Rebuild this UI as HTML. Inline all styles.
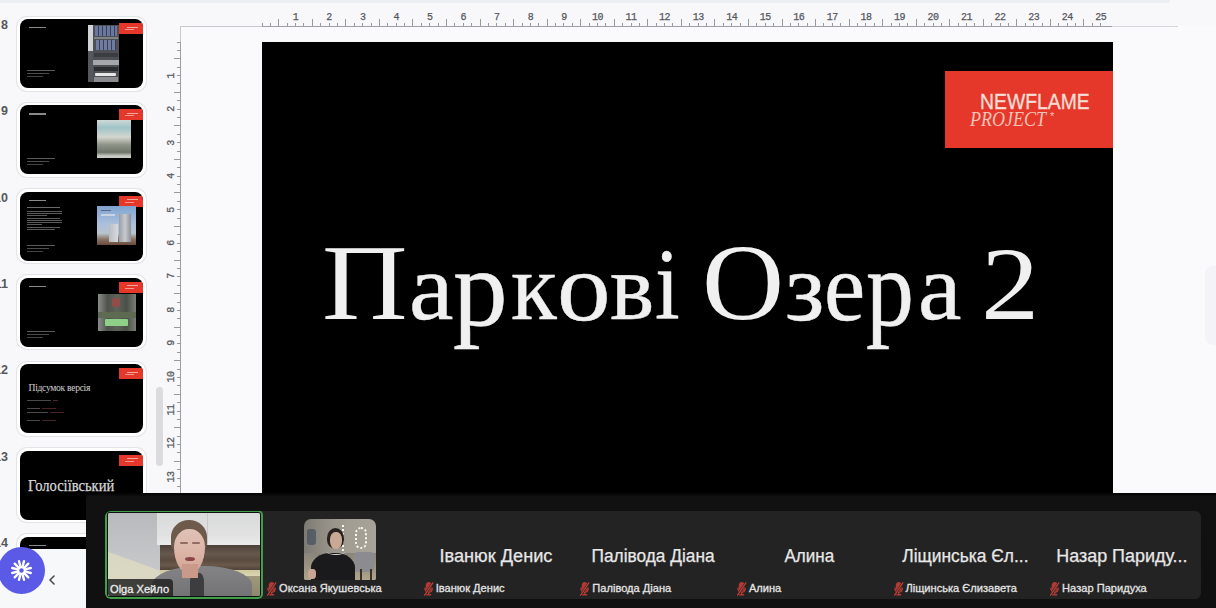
<!DOCTYPE html><html><head><meta charset="utf-8"><style>
*{box-sizing:border-box;margin:0;padding:0}
html,body{width:1216px;height:608px;overflow:hidden;background:#f8f8fb;font-family:"Liberation Sans",sans-serif;position:relative}
.abs{position:absolute}
#topband{left:0;top:0;width:1170px;height:2.5px;background:#eceef1;border-radius:0 0 6px 0}
#canvas{left:180px;top:26px;width:1036px;height:582px;background:#fafafd}
#hline{left:180px;top:25.5px;width:998px;height:1.2px;background:linear-gradient(90deg,#c8c9cc 0,#c8c9cc 82px,#9fa0a3 82px,#9fa0a3 932px,#d6d7da 932px)}
#vline{left:180px;top:26px;width:1.2px;height:470px;background:linear-gradient(180deg,#c8c9cc 0,#c8c9cc 16px,#9fa0a3 16px)}
.tk{position:absolute;background:#98999d}
.rn{position:absolute;width:20px;text-align:center;font-size:10px;color:#55575b;-webkit-text-stroke:0.25px #55575b;line-height:10px;font-family:"Liberation Mono",monospace;letter-spacing:-0.5px}
.rv{transform:rotate(-90deg)}
#slide{left:262px;top:42px;width:851px;height:460px;background:#000}
#logo{left:945px;top:71px;width:168px;height:77px;background:#e6382a}
#nf{left:980.4px;top:89px;font-size:22px;color:#f7ddd5;white-space:nowrap;line-height:26px;transform:scale(0.88,0.987);transform-origin:0 0;-webkit-text-stroke:0.35px #f7ddd5}
#pj{left:969.6px;top:106.4px;font-family:"Liberation Serif",serif;font-style:italic;font-size:22px;color:#f3c4b8;white-space:nowrap;line-height:26px;transform:scale(0.819,1);transform-origin:0 0}
#ast{left:1050px;top:110px;font-family:"Liberation Sans",sans-serif;font-size:11px;line-height:12px;color:#f3c4b8}
.tg{position:absolute;font-family:"Liberation Serif",serif;font-size:106px;color:#f0f0f0;white-space:nowrap;line-height:117px;transform-origin:0 0;-webkit-text-stroke:0.5px #f0f0f0}
.num{left:-29px;width:37px;text-align:right;font-size:12.5px;color:#55575b;line-height:14px;font-weight:bold}
.th{left:17px;width:129px;height:74px;background:#fff;border-radius:10px;box-shadow:0 0 0 1px #e3e4e8}
.th .in{position:absolute;left:3px;top:2.5px;width:123px;height:69px;background:#000;border-radius:8px;overflow:hidden}
.rd{position:absolute;right:0;top:4px;width:24px;height:11px;background:#e5382a}
.rd:before{content:'';position:absolute;left:8px;top:3.5px;width:11px;height:1px;background:#f2a89c}
.rd:after{content:'';position:absolute;left:6px;top:6px;width:9px;height:1px;background:#ee9a8e}
.tl{position:absolute;height:1px;background:#8a8a8a}
#scroll{left:156px;top:387px;width:7px;height:79px;border-radius:4px;background:#dadbdd}
#lpanel{left:0;top:549px;width:86px;height:59px;background:#f7f8fa}
#bar{left:86px;top:493px;width:1130px;height:115px;background:linear-gradient(180deg,#050505 0,#080808 2px,#111 3px,#101010);border-radius:6px 0 0 0}
#panel{left:104.5px;top:511px;width:1096px;height:87.5px;background:#232323;border-radius:6px;overflow:hidden}
.tile{position:absolute;top:0;height:87px;width:156.6px}
.big{position:absolute;top:34.5px;left:0;width:100%;text-align:center;font-size:18px;color:#e8e8e8;white-space:nowrap;line-height:20px;-webkit-text-stroke:0.25px #e8e8e8}
.sm{position:absolute;top:71px;left:18px;font-size:11.1px;color:#e4e4e4;white-space:nowrap;line-height:12px;-webkit-text-stroke:0.3px #e4e4e4}
.mic{position:absolute;top:70.5px;left:5px}
#purple{left:-2px;top:546.5px;width:47px;height:47px;border-radius:50%;background:#5b5ae6}
</style></head><body>
<div class="abs" id="topband"></div>
<div class="abs" id="canvas"></div>
<div class="abs" id="hline"></div><div class="abs" id="vline"></div>
<div class="tk" style="left:261.50px;top:22.5px;width:1px;height:3.5px"></div>
<div class="tk" style="left:269.89px;top:22.5px;width:1px;height:3.5px"></div>
<div class="tk" style="left:278.27px;top:19.0px;width:1px;height:7px"></div>
<div class="tk" style="left:286.66px;top:22.5px;width:1px;height:3.5px"></div>
<div class="tk" style="left:295.05px;top:22.5px;width:1px;height:3.5px"></div>
<div class="tk" style="left:303.44px;top:22.5px;width:1px;height:3.5px"></div>
<div class="tk" style="left:311.82px;top:19.0px;width:1px;height:7px"></div>
<div class="tk" style="left:320.21px;top:22.5px;width:1px;height:3.5px"></div>
<div class="tk" style="left:328.60px;top:22.5px;width:1px;height:3.5px"></div>
<div class="tk" style="left:336.99px;top:22.5px;width:1px;height:3.5px"></div>
<div class="tk" style="left:345.38px;top:19.0px;width:1px;height:7px"></div>
<div class="tk" style="left:353.76px;top:22.5px;width:1px;height:3.5px"></div>
<div class="tk" style="left:362.15px;top:22.5px;width:1px;height:3.5px"></div>
<div class="tk" style="left:370.54px;top:22.5px;width:1px;height:3.5px"></div>
<div class="tk" style="left:378.92px;top:19.0px;width:1px;height:7px"></div>
<div class="tk" style="left:387.31px;top:22.5px;width:1px;height:3.5px"></div>
<div class="tk" style="left:395.70px;top:22.5px;width:1px;height:3.5px"></div>
<div class="tk" style="left:404.09px;top:22.5px;width:1px;height:3.5px"></div>
<div class="tk" style="left:412.48px;top:19.0px;width:1px;height:7px"></div>
<div class="tk" style="left:420.86px;top:22.5px;width:1px;height:3.5px"></div>
<div class="tk" style="left:429.25px;top:22.5px;width:1px;height:3.5px"></div>
<div class="tk" style="left:437.64px;top:22.5px;width:1px;height:3.5px"></div>
<div class="tk" style="left:446.02px;top:19.0px;width:1px;height:7px"></div>
<div class="tk" style="left:454.41px;top:22.5px;width:1px;height:3.5px"></div>
<div class="tk" style="left:462.80px;top:22.5px;width:1px;height:3.5px"></div>
<div class="tk" style="left:471.19px;top:22.5px;width:1px;height:3.5px"></div>
<div class="tk" style="left:479.57px;top:19.0px;width:1px;height:7px"></div>
<div class="tk" style="left:487.96px;top:22.5px;width:1px;height:3.5px"></div>
<div class="tk" style="left:496.35px;top:22.5px;width:1px;height:3.5px"></div>
<div class="tk" style="left:504.74px;top:22.5px;width:1px;height:3.5px"></div>
<div class="tk" style="left:513.12px;top:19.0px;width:1px;height:7px"></div>
<div class="tk" style="left:521.51px;top:22.5px;width:1px;height:3.5px"></div>
<div class="tk" style="left:529.90px;top:22.5px;width:1px;height:3.5px"></div>
<div class="tk" style="left:538.29px;top:22.5px;width:1px;height:3.5px"></div>
<div class="tk" style="left:546.67px;top:19.0px;width:1px;height:7px"></div>
<div class="tk" style="left:555.06px;top:22.5px;width:1px;height:3.5px"></div>
<div class="tk" style="left:563.45px;top:22.5px;width:1px;height:3.5px"></div>
<div class="tk" style="left:571.84px;top:22.5px;width:1px;height:3.5px"></div>
<div class="tk" style="left:580.22px;top:19.0px;width:1px;height:7px"></div>
<div class="tk" style="left:588.61px;top:22.5px;width:1px;height:3.5px"></div>
<div class="tk" style="left:597.00px;top:22.5px;width:1px;height:3.5px"></div>
<div class="tk" style="left:605.39px;top:22.5px;width:1px;height:3.5px"></div>
<div class="tk" style="left:613.77px;top:19.0px;width:1px;height:7px"></div>
<div class="tk" style="left:622.16px;top:22.5px;width:1px;height:3.5px"></div>
<div class="tk" style="left:630.55px;top:22.5px;width:1px;height:3.5px"></div>
<div class="tk" style="left:638.94px;top:22.5px;width:1px;height:3.5px"></div>
<div class="tk" style="left:647.33px;top:19.0px;width:1px;height:7px"></div>
<div class="tk" style="left:655.71px;top:22.5px;width:1px;height:3.5px"></div>
<div class="tk" style="left:664.10px;top:22.5px;width:1px;height:3.5px"></div>
<div class="tk" style="left:672.49px;top:22.5px;width:1px;height:3.5px"></div>
<div class="tk" style="left:680.88px;top:19.0px;width:1px;height:7px"></div>
<div class="tk" style="left:689.26px;top:22.5px;width:1px;height:3.5px"></div>
<div class="tk" style="left:697.65px;top:22.5px;width:1px;height:3.5px"></div>
<div class="tk" style="left:706.04px;top:22.5px;width:1px;height:3.5px"></div>
<div class="tk" style="left:714.42px;top:19.0px;width:1px;height:7px"></div>
<div class="tk" style="left:722.81px;top:22.5px;width:1px;height:3.5px"></div>
<div class="tk" style="left:731.20px;top:22.5px;width:1px;height:3.5px"></div>
<div class="tk" style="left:739.59px;top:22.5px;width:1px;height:3.5px"></div>
<div class="tk" style="left:747.97px;top:19.0px;width:1px;height:7px"></div>
<div class="tk" style="left:756.36px;top:22.5px;width:1px;height:3.5px"></div>
<div class="tk" style="left:764.75px;top:22.5px;width:1px;height:3.5px"></div>
<div class="tk" style="left:773.14px;top:22.5px;width:1px;height:3.5px"></div>
<div class="tk" style="left:781.52px;top:19.0px;width:1px;height:7px"></div>
<div class="tk" style="left:789.91px;top:22.5px;width:1px;height:3.5px"></div>
<div class="tk" style="left:798.30px;top:22.5px;width:1px;height:3.5px"></div>
<div class="tk" style="left:806.69px;top:22.5px;width:1px;height:3.5px"></div>
<div class="tk" style="left:815.07px;top:19.0px;width:1px;height:7px"></div>
<div class="tk" style="left:823.46px;top:22.5px;width:1px;height:3.5px"></div>
<div class="tk" style="left:831.85px;top:22.5px;width:1px;height:3.5px"></div>
<div class="tk" style="left:840.24px;top:22.5px;width:1px;height:3.5px"></div>
<div class="tk" style="left:848.62px;top:19.0px;width:1px;height:7px"></div>
<div class="tk" style="left:857.01px;top:22.5px;width:1px;height:3.5px"></div>
<div class="tk" style="left:865.40px;top:22.5px;width:1px;height:3.5px"></div>
<div class="tk" style="left:873.79px;top:22.5px;width:1px;height:3.5px"></div>
<div class="tk" style="left:882.17px;top:19.0px;width:1px;height:7px"></div>
<div class="tk" style="left:890.56px;top:22.5px;width:1px;height:3.5px"></div>
<div class="tk" style="left:898.95px;top:22.5px;width:1px;height:3.5px"></div>
<div class="tk" style="left:907.34px;top:22.5px;width:1px;height:3.5px"></div>
<div class="tk" style="left:915.72px;top:19.0px;width:1px;height:7px"></div>
<div class="tk" style="left:924.11px;top:22.5px;width:1px;height:3.5px"></div>
<div class="tk" style="left:932.50px;top:22.5px;width:1px;height:3.5px"></div>
<div class="tk" style="left:940.89px;top:22.5px;width:1px;height:3.5px"></div>
<div class="tk" style="left:949.27px;top:19.0px;width:1px;height:7px"></div>
<div class="tk" style="left:957.66px;top:22.5px;width:1px;height:3.5px"></div>
<div class="tk" style="left:966.05px;top:22.5px;width:1px;height:3.5px"></div>
<div class="tk" style="left:974.44px;top:22.5px;width:1px;height:3.5px"></div>
<div class="tk" style="left:982.82px;top:19.0px;width:1px;height:7px"></div>
<div class="tk" style="left:991.21px;top:22.5px;width:1px;height:3.5px"></div>
<div class="tk" style="left:999.60px;top:22.5px;width:1px;height:3.5px"></div>
<div class="tk" style="left:1007.99px;top:22.5px;width:1px;height:3.5px"></div>
<div class="tk" style="left:1016.37px;top:19.0px;width:1px;height:7px"></div>
<div class="tk" style="left:1024.76px;top:22.5px;width:1px;height:3.5px"></div>
<div class="tk" style="left:1033.15px;top:22.5px;width:1px;height:3.5px"></div>
<div class="tk" style="left:1041.54px;top:22.5px;width:1px;height:3.5px"></div>
<div class="tk" style="left:1049.92px;top:19.0px;width:1px;height:7px"></div>
<div class="tk" style="left:1058.31px;top:22.5px;width:1px;height:3.5px"></div>
<div class="tk" style="left:1066.70px;top:22.5px;width:1px;height:3.5px"></div>
<div class="tk" style="left:1075.09px;top:22.5px;width:1px;height:3.5px"></div>
<div class="tk" style="left:1083.47px;top:19.0px;width:1px;height:7px"></div>
<div class="tk" style="left:1091.86px;top:22.5px;width:1px;height:3.5px"></div>
<div class="tk" style="left:1100.25px;top:22.5px;width:1px;height:3.5px"></div>
<div class="rn" style="left:285.55px;top:12.5px">1</div>
<div class="rn" style="left:319.10px;top:12.5px">2</div>
<div class="rn" style="left:352.65px;top:12.5px">3</div>
<div class="rn" style="left:386.20px;top:12.5px">4</div>
<div class="rn" style="left:419.75px;top:12.5px">5</div>
<div class="rn" style="left:453.30px;top:12.5px">6</div>
<div class="rn" style="left:486.85px;top:12.5px">7</div>
<div class="rn" style="left:520.40px;top:12.5px">8</div>
<div class="rn" style="left:553.95px;top:12.5px">9</div>
<div class="rn" style="left:587.50px;top:12.5px">10</div>
<div class="rn" style="left:621.05px;top:12.5px">11</div>
<div class="rn" style="left:654.60px;top:12.5px">12</div>
<div class="rn" style="left:688.15px;top:12.5px">13</div>
<div class="rn" style="left:721.70px;top:12.5px">14</div>
<div class="rn" style="left:755.25px;top:12.5px">15</div>
<div class="rn" style="left:788.80px;top:12.5px">16</div>
<div class="rn" style="left:822.35px;top:12.5px">17</div>
<div class="rn" style="left:855.90px;top:12.5px">18</div>
<div class="rn" style="left:889.45px;top:12.5px">19</div>
<div class="rn" style="left:923.00px;top:12.5px">20</div>
<div class="rn" style="left:956.55px;top:12.5px">21</div>
<div class="rn" style="left:990.10px;top:12.5px">22</div>
<div class="rn" style="left:1023.65px;top:12.5px">23</div>
<div class="rn" style="left:1057.20px;top:12.5px">24</div>
<div class="rn" style="left:1090.75px;top:12.5px">25</div>
<div class="tk" style="left:177.0px;top:41.50px;width:3.5px;height:1px"></div>
<div class="tk" style="left:177.0px;top:49.89px;width:3.5px;height:1px"></div>
<div class="tk" style="left:173.5px;top:58.27px;width:7px;height:1px"></div>
<div class="tk" style="left:177.0px;top:66.66px;width:3.5px;height:1px"></div>
<div class="tk" style="left:177.0px;top:75.05px;width:3.5px;height:1px"></div>
<div class="tk" style="left:177.0px;top:83.44px;width:3.5px;height:1px"></div>
<div class="tk" style="left:173.5px;top:91.82px;width:7px;height:1px"></div>
<div class="tk" style="left:177.0px;top:100.21px;width:3.5px;height:1px"></div>
<div class="tk" style="left:177.0px;top:108.60px;width:3.5px;height:1px"></div>
<div class="tk" style="left:177.0px;top:116.99px;width:3.5px;height:1px"></div>
<div class="tk" style="left:173.5px;top:125.38px;width:7px;height:1px"></div>
<div class="tk" style="left:177.0px;top:133.76px;width:3.5px;height:1px"></div>
<div class="tk" style="left:177.0px;top:142.15px;width:3.5px;height:1px"></div>
<div class="tk" style="left:177.0px;top:150.54px;width:3.5px;height:1px"></div>
<div class="tk" style="left:173.5px;top:158.92px;width:7px;height:1px"></div>
<div class="tk" style="left:177.0px;top:167.31px;width:3.5px;height:1px"></div>
<div class="tk" style="left:177.0px;top:175.70px;width:3.5px;height:1px"></div>
<div class="tk" style="left:177.0px;top:184.09px;width:3.5px;height:1px"></div>
<div class="tk" style="left:173.5px;top:192.47px;width:7px;height:1px"></div>
<div class="tk" style="left:177.0px;top:200.86px;width:3.5px;height:1px"></div>
<div class="tk" style="left:177.0px;top:209.25px;width:3.5px;height:1px"></div>
<div class="tk" style="left:177.0px;top:217.64px;width:3.5px;height:1px"></div>
<div class="tk" style="left:173.5px;top:226.02px;width:7px;height:1px"></div>
<div class="tk" style="left:177.0px;top:234.41px;width:3.5px;height:1px"></div>
<div class="tk" style="left:177.0px;top:242.80px;width:3.5px;height:1px"></div>
<div class="tk" style="left:177.0px;top:251.19px;width:3.5px;height:1px"></div>
<div class="tk" style="left:173.5px;top:259.57px;width:7px;height:1px"></div>
<div class="tk" style="left:177.0px;top:267.96px;width:3.5px;height:1px"></div>
<div class="tk" style="left:177.0px;top:276.35px;width:3.5px;height:1px"></div>
<div class="tk" style="left:177.0px;top:284.74px;width:3.5px;height:1px"></div>
<div class="tk" style="left:173.5px;top:293.12px;width:7px;height:1px"></div>
<div class="tk" style="left:177.0px;top:301.51px;width:3.5px;height:1px"></div>
<div class="tk" style="left:177.0px;top:309.90px;width:3.5px;height:1px"></div>
<div class="tk" style="left:177.0px;top:318.29px;width:3.5px;height:1px"></div>
<div class="tk" style="left:173.5px;top:326.67px;width:7px;height:1px"></div>
<div class="tk" style="left:177.0px;top:335.06px;width:3.5px;height:1px"></div>
<div class="tk" style="left:177.0px;top:343.45px;width:3.5px;height:1px"></div>
<div class="tk" style="left:177.0px;top:351.84px;width:3.5px;height:1px"></div>
<div class="tk" style="left:173.5px;top:360.22px;width:7px;height:1px"></div>
<div class="tk" style="left:177.0px;top:368.61px;width:3.5px;height:1px"></div>
<div class="tk" style="left:177.0px;top:377.00px;width:3.5px;height:1px"></div>
<div class="tk" style="left:177.0px;top:385.39px;width:3.5px;height:1px"></div>
<div class="tk" style="left:173.5px;top:393.77px;width:7px;height:1px"></div>
<div class="tk" style="left:177.0px;top:402.16px;width:3.5px;height:1px"></div>
<div class="tk" style="left:177.0px;top:410.55px;width:3.5px;height:1px"></div>
<div class="tk" style="left:177.0px;top:418.94px;width:3.5px;height:1px"></div>
<div class="tk" style="left:173.5px;top:427.32px;width:7px;height:1px"></div>
<div class="tk" style="left:177.0px;top:435.71px;width:3.5px;height:1px"></div>
<div class="tk" style="left:177.0px;top:444.10px;width:3.5px;height:1px"></div>
<div class="tk" style="left:177.0px;top:452.49px;width:3.5px;height:1px"></div>
<div class="tk" style="left:173.5px;top:460.87px;width:7px;height:1px"></div>
<div class="tk" style="left:177.0px;top:469.26px;width:3.5px;height:1px"></div>
<div class="tk" style="left:177.0px;top:477.65px;width:3.5px;height:1px"></div>
<div class="tk" style="left:177.0px;top:486.04px;width:3.5px;height:1px"></div>
<div class="rn rv" style="left:162.30px;top:70.90px">1</div>
<div class="rn rv" style="left:162.30px;top:104.30px">2</div>
<div class="rn rv" style="left:162.30px;top:137.70px">3</div>
<div class="rn rv" style="left:162.30px;top:171.10px">4</div>
<div class="rn rv" style="left:162.30px;top:204.50px">5</div>
<div class="rn rv" style="left:162.30px;top:237.90px">6</div>
<div class="rn rv" style="left:162.30px;top:271.30px">7</div>
<div class="rn rv" style="left:162.30px;top:304.70px">8</div>
<div class="rn rv" style="left:162.30px;top:338.10px">9</div>
<div class="rn rv" style="left:162.30px;top:371.50px">10</div>
<div class="rn rv" style="left:162.30px;top:404.90px">11</div>
<div class="rn rv" style="left:162.30px;top:438.30px">12</div>
<div class="rn rv" style="left:162.30px;top:471.70px">13</div>
<div class="abs" style="left:1205px;top:266px;width:20px;height:79px;border-radius:8px;background:#f4f4f8"></div>
<div class="abs" id="slide"></div>
<div class="abs" id="logo"></div>
<div class="abs" id="nf">NEWFLAME</div>
<div class="abs" id="pj">PROJECT</div><div class="abs" id="ast">*</div>
<div class="tg" style="left:322.3px;top:224.2px;transform:scale(1.118,1.014);-webkit-text-stroke:0">П</div>
<div class="tg" style="left:408.9px;top:234.3px;transform:scale(0.945,0.902)">а</div>
<div class="tg" style="left:452.9px;top:228.6px;transform:scale(1.030,1.033)">р</div>
<div class="tg" style="left:511.0px;top:234.1px;transform:scale(0.890,0.908)">к</div>
<div class="tg" style="left:556.5px;top:233.9px;transform:scale(1.011,0.912)">о</div>
<div class="tg" style="left:609.8px;top:234.1px;transform:scale(0.884,0.908)">в</div>
<div class="tg" style="left:655.3px;top:229.3px;transform:scale(0.838,0.960)">і</div>
<div class="tg" style="left:702.3px;top:223.0px;transform:scale(1.072,1.025);-webkit-text-stroke:0">О</div>
<div class="tg" style="left:785.2px;top:233.9px;transform:scale(0.943,0.912)">з</div>
<div class="tg" style="left:824.2px;top:233.9px;transform:scale(0.875,0.912)">е</div>
<div class="tg" style="left:866.2px;top:228.6px;transform:scale(0.904,1.033)">р</div>
<div class="tg" style="left:918.2px;top:234.3px;transform:scale(0.924,0.902)">а</div>
<div class="tg" style="left:980.9px;top:228.1px;transform:scale(1.100,0.973);-webkit-text-stroke:0">2</div>

<div class="abs num" style="top:18.0px">8</div>
<div class="abs th" style="top:16.5px"><div class="in" id="in8"><div class="rd"></div><div class="tl" style="left:9px;top:8px;width:17px;height:1.2px;background:#8a8a8a"></div><div class="tl" style="left:7px;top:51px;width:28px;height:1px;background:#5a5a5a"></div><div class="tl" style="left:7px;top:54px;width:22px;height:1px;background:#4c4c4c"></div><div class="tl" style="left:7px;top:57px;width:16px;height:1px;background:#444"></div><div style="position:absolute;left:68px;top:6px;width:31px;height:57px;background:#4e5056;overflow:hidden"><div style="position:absolute;left:0;top:0;width:5px;height:26px;background:#d2d3d6"></div><div style="position:absolute;left:0;top:26px;width:5px;height:31px;background:#55575c"></div><div style="position:absolute;left:7px;top:1px;width:22px;height:10px;background:repeating-linear-gradient(90deg,#6a78a0 0 3px,#3a4050 3px 4px)"></div><div style="position:absolute;left:6px;top:12px;width:24px;height:2px;background:#808388"></div><div style="position:absolute;left:8px;top:15px;width:20px;height:10px;background:repeating-linear-gradient(90deg,#6e7ca4 0 3px,#3a4050 3px 4px)"></div><div style="position:absolute;left:6px;top:28px;width:24px;height:4px;background:#3a3c42"></div><div style="position:absolute;left:5px;top:35px;width:26px;height:5px;background:#a5a7ac"></div><div style="position:absolute;left:6px;top:42px;width:24px;height:4px;background:#2a2c30"></div><div style="position:absolute;left:7px;top:48px;width:21px;height:3px;background:#e6e6e6;border-radius:1px"></div><div style="position:absolute;left:6px;top:52px;width:24px;height:5px;background:#8a8c90"></div></div></div></div>
<div class="abs num" style="top:104.33px">9</div>
<div class="abs th" style="top:102.83px"><div class="in" id="in9"><div class="rd"></div><div class="tl" style="left:9px;top:8px;width:17px;height:1.2px;background:#8a8a8a"></div><div class="tl" style="left:7px;top:53px;width:28px;height:1px;background:#5a5a5a"></div><div class="tl" style="left:7px;top:56px;width:22px;height:1px;background:#4c4c4c"></div><div class="tl" style="left:7px;top:59px;width:16px;height:1px;background:#444"></div><div style="position:absolute;left:77px;top:15px;width:34px;height:38px;background:linear-gradient(180deg,#d0d8d6 0,#9fc4c8 20%,#d3d6cf 45%,#8e9488 65%,#6f7468 85%,#c9cbc5 95%)"></div></div></div>
<div class="abs num" style="top:190.66px">10</div>
<div class="abs th" style="top:189.16px"><div class="in" id="in10"><div class="rd"></div><div class="tl" style="left:9px;top:8px;width:17px;height:1.2px;background:#8a8a8a"></div><div class="tl" style="left:7px;top:15px;width:33px;height:1px;background:#6a6a6a"></div><div class="tl" style="left:7px;top:19px;width:35px;height:1px;background:#5a5a5a"></div><div class="tl" style="left:7px;top:21px;width:35px;height:1px;background:#5a5a5a"></div><div class="tl" style="left:7px;top:23px;width:20px;height:1px;background:#5a5a5a"></div><div class="tl" style="left:7px;top:26px;width:33px;height:1px;background:#5a5a5a"></div><div class="tl" style="left:7px;top:28px;width:35px;height:1px;background:#5a5a5a"></div><div class="tl" style="left:7px;top:30px;width:35px;height:1px;background:#5a5a5a"></div><div class="tl" style="left:7px;top:32px;width:15px;height:1px;background:#5a5a5a"></div><div class="tl" style="left:7px;top:35px;width:33px;height:1px;background:#5a5a5a"></div><div class="tl" style="left:7px;top:37px;width:28px;height:1px;background:#5a5a5a"></div><div class="tl" style="left:7px;top:53px;width:28px;height:1px;background:#5a5a5a"></div><div class="tl" style="left:7px;top:56px;width:22px;height:1px;background:#4c4c4c"></div><div class="tl" style="left:7px;top:59px;width:16px;height:1px;background:#444"></div><div style="position:absolute;left:76.5px;top:14px;width:39.5px;height:39.5px;overflow:hidden;background:linear-gradient(180deg,#7fa3d0,#a9c0dc 45%,#b8c4cc 70%,#8a7466 85%,#6a4a3a)"><div style="position:absolute;left:4px;top:4px;width:10px;height:1px;background:#5a6a88"></div><div style="position:absolute;left:4px;top:8px;width:14px;height:2px;background:#c8d4e4"></div><div style="position:absolute;left:22px;top:8px;width:12px;height:28px;background:linear-gradient(90deg,#9a9ea6,#c8cad0 50%,#8c9098)"></div><div style="position:absolute;left:12px;top:18px;width:9px;height:18px;background:linear-gradient(90deg,#b8bcc4,#d8dade)"></div></div></div></div>
<div class="abs num" style="top:276.99px">11</div>
<div class="abs th" style="top:275.49px"><div class="in" id="in11"><div class="rd"></div><div class="tl" style="left:9px;top:8px;width:17px;height:1.2px;background:#8a8a8a"></div><div class="tl" style="left:7px;top:53px;width:28px;height:1px;background:#5a5a5a"></div><div class="tl" style="left:7px;top:56px;width:22px;height:1px;background:#4c4c4c"></div><div class="tl" style="left:7px;top:59px;width:16px;height:1px;background:#444"></div><div style="position:absolute;left:78px;top:16px;width:37.5px;height:37px;overflow:hidden;background:linear-gradient(90deg,#8a8e8a,#4e544c 25%,#5d6358 50%,#4a5048 75%,#7a7e78)"><div style="position:absolute;left:14px;top:4px;width:8px;height:9px;background:#a04848;border-radius:2px;opacity:.8"></div><div style="position:absolute;left:0;top:18px;width:37.5px;height:6px;background:#5f6a52"></div><div style="position:absolute;left:7px;top:25px;width:23px;height:7px;background:#8fd088;border-radius:1px"></div></div></div></div>
<div class="abs num" style="top:363.32px">12</div>
<div class="abs th" style="top:361.82px"><div class="in" id="in12"><div class="rd"></div><div style="position:absolute;left:8.5px;top:18.5px;font-family:'Liberation Serif',serif;font-size:9.6px;line-height:10px;color:#d0d0d0;white-space:nowrap;letter-spacing:-0.3px">Підсумок версiя</div><div class="tl" style="left:7px;top:35.5px;width:24px;height:1px;background:#4a4a4a"></div><div class="tl" style="left:33px;top:35.5px;width:5px;height:1px;background:#4a2a2a"></div><div class="tl" style="left:7px;top:43.5px;width:13px;height:1px;background:#4a4a4a"></div><div class="tl" style="left:22px;top:43.5px;width:14px;height:1px;background:#4a2424"></div><div class="tl" style="left:7px;top:48px;width:21px;height:1px;background:#4a4a4a"></div><div class="tl" style="left:30px;top:48px;width:14px;height:1px;background:#4a2424"></div><div class="tl" style="left:7px;top:56px;width:13px;height:1px;background:#4a4a4a"></div><div class="tl" style="left:22px;top:56px;width:14px;height:1px;background:#4a2424"></div></div></div>
<div class="abs num" style="top:449.65px">13</div>
<div class="abs th" style="top:448.15px"><div class="in" id="in13"><div class="rd"></div><div style="position:absolute;left:8px;top:26.5px;font-family:'Liberation Serif',serif;font-size:16px;line-height:18px;color:#d8d8d8;white-space:nowrap;transform:scaleX(0.91);transform-origin:0 0;-webkit-text-stroke:0.25px #d8d8d8">Голосіївський</div></div></div>
<div class="abs num" style="top:535.98px">14</div>
<div class="abs th" style="top:534.48px"><div class="in" id="in14"><div class="rd"></div><div class="tl" style="left:9px;top:8px;width:17px;height:1.2px;background:#8a8a8a"></div></div></div>
<div class="abs" id="scroll"></div>
<div class="abs" id="lpanel"></div>
<div class="abs" id="purple"><svg width="47" height="47" viewBox="0 0 47 47" style="position:absolute;left:0;top:0"><g stroke="#fff" stroke-width="2.4" stroke-linecap="round"><path d="M27.56 24.59 L32.77 25.98"/><path d="M26.47 26.47 L30.29 30.29"/><path d="M24.59 27.56 L25.98 32.77"/><path d="M22.41 27.56 L21.02 32.77"/><path d="M20.53 26.47 L16.71 30.29"/><path d="M19.44 24.59 L14.23 25.98"/><path d="M19.44 22.41 L14.23 21.02"/><path d="M20.53 20.53 L16.71 16.71"/><path d="M22.41 19.44 L21.02 14.23"/><path d="M24.59 19.44 L25.98 14.23"/><path d="M26.47 20.53 L30.29 16.71"/><path d="M27.56 22.41 L32.77 21.02"/></g><circle cx="23.5" cy="23.5" r="4.4" fill="#fff"/><circle cx="23.5" cy="23.5" r="2.2" fill="#5b5ae6"/></svg></div>
<svg class="abs" style="left:48px;top:575px" width="8" height="10" viewBox="0 0 8 10"><path d="M6 1 L2 5 L6 9" fill="none" stroke="#4a4a4a" stroke-width="1.6" stroke-linecap="round" stroke-linejoin="round"/></svg>
<div class="abs" id="bar"></div>
<div class="abs" id="panel"><div class="tile" style="left:0.00px;width:158.5px;height:88.5px;top:-0.7px;border:2px solid #3f9f4a;border-radius:5px;background:#101010;overflow:hidden">
<div style="position:absolute;left:1px;top:1px;right:1px;bottom:1px;overflow:hidden;border-radius:2px;background:#c3c3c5">
 <div style="position:absolute;left:0;top:0;width:60px;height:84px;background:linear-gradient(180deg,#b9babd 0%,#c4c5c7 50%,#cacaca 100%)"></div>
 <div style="position:absolute;left:-10px;top:35px;width:75px;height:60px;background:linear-gradient(180deg,#d9d6c2,#e2dec4);transform:skewY(20deg);transform-origin:0 0"></div>
 <div style="position:absolute;left:49px;top:0;width:110px;height:32px;background:linear-gradient(180deg,#d9dada,#e2e2e2 70%,#ebebeb)"></div>
 <div style="position:absolute;left:99px;top:0;width:1px;height:32px;background:#c8c8c8"></div>
 <div style="position:absolute;left:52px;top:32px;width:110px;height:25px;background:linear-gradient(180deg,#4d4038,#66584c 35%,#5a4a3f 60%,#6a5a4d 80%,#4f4238)"></div>
 <div style="position:absolute;left:52px;top:57px;width:105px;height:6px;background:linear-gradient(180deg,#cfc9a0,#dcd6b2)"></div>
 <div style="position:absolute;left:52px;top:63px;width:105px;height:25px;background:linear-gradient(180deg,#a09a7c,#8a8468)"></div>
 <div style="position:absolute;left:44px;top:53px;width:100px;height:40px;border-radius:48% 48% 0 0;background:linear-gradient(180deg,#848486,#6e6e70)"></div>
 <div style="position:absolute;left:82px;top:60px;width:14px;height:30px;background:#3d3d3f;border-radius:30% 30% 0 0"></div>
 <div style="position:absolute;left:63px;top:7px;width:36px;height:34px;border-radius:50% 50% 30% 30%;background:#6e5a4a"></div>
 <div style="position:absolute;left:66px;top:16px;width:31px;height:45px;border-radius:48% 48% 50% 50% / 40% 40% 60% 60%;background:linear-gradient(180deg,#e0c2b6,#dbb4a6 55%,#d0a294)"></div>
 <div style="position:absolute;left:74px;top:51px;width:16px;height:14px;background:#c99a8a"></div>
 <div style="position:absolute;left:72px;top:29px;width:8px;height:2px;border-radius:1px;background:#8f6d62"></div>
 <div style="position:absolute;left:84px;top:29px;width:8px;height:2px;border-radius:1px;background:#8f6d62"></div>
 <div style="position:absolute;left:77px;top:44px;width:10px;height:4px;border-radius:50%;background:#8a4646"></div>
 <div style="position:absolute;left:0;top:66px;width:65px;height:18px;background:rgba(34,34,34,0.85);border-radius:0 4px 0 0"></div>
 <div style="position:absolute;left:2.5px;top:69.5px;font-size:11.1px;color:#ececec;white-space:nowrap;line-height:12px;-webkit-text-stroke:0.3px #ececec">Olga Хейло</div>
</div></div>
<div class="tile" style="left:156.60px">
<div style="position:absolute;left:42.9px;top:8px;width:72px;height:61px;border-radius:7px 7px 2px 2px;overflow:hidden;background:linear-gradient(90deg,#7d7a74,#948f86 30%,#a29d93 60%,#a8a399)">
 <div style="position:absolute;left:0;top:34px;width:72px;height:27px;background:linear-gradient(180deg,#8a857c,#a09682 60%,#b0a48c)"></div>
 <div style="position:absolute;left:51px;top:8px;width:12px;height:22px;border-radius:6px;border:2px dotted #fbf8ea"></div>
 <div style="position:absolute;left:38px;top:6px;width:3px;height:26px;border-left:2.2px dotted #fbf8ea"></div>
 <div style="position:absolute;left:3px;top:10px;width:9px;height:16px;background:#4a5560;border-radius:3px;opacity:.8"></div>
 <div style="position:absolute;left:50px;top:33px;width:20px;height:20px;background:#8c8c90;border-radius:4px"></div>
 <div style="position:absolute;left:56px;top:50px;width:2px;height:11px;background:#3a3028"></div>
 <div style="position:absolute;left:66px;top:50px;width:2px;height:11px;background:#3a3028"></div>
 <div style="position:absolute;left:7px;top:34px;width:44px;height:32px;border-radius:45% 45% 0 0;background:#1a1a1c"></div>
 <div style="position:absolute;left:23px;top:9px;width:17px;height:20px;border-radius:50% 50% 40% 40%;background:#2a2220"></div>
 <div style="position:absolute;left:26px;top:13px;width:12px;height:17px;border-radius:45%;background:#caa896"></div>
 <div style="position:absolute;left:23px;top:30px;width:18px;height:6px;border-bottom:1.6px solid #d8d8d8;border-radius:0 0 50% 50%"></div>
 <div style="position:absolute;left:4px;top:50px;width:8px;height:10px;background:#c9a694;border-radius:40%"></div>
</div>
<svg class="mic" viewBox="0 0 11 14" width="11" height="14"><g fill="none" stroke="#b23a35" stroke-width="1.5" stroke-linecap="round"><rect x="3.5" y="0.8" width="4.2" height="7.4" rx="2.1" fill="#b23a35"/><path d="M2 6.3 Q2 10.2 5.6 10.2 Q9.2 10.2 9.2 6.3"/><path d="M5.6 10.2 V12.8 M3.6 12.8 H7.6"/><path d="M9.8 0.8 L1.6 13.2" stroke="#232323" stroke-width="2.2"/><path d="M9.8 0.8 L1.6 13.2" stroke="#c24038" stroke-width="1.2"/></g></svg><div class="sm">Оксана Якушевська</div></div>
<div class="tile" style="left:313.20px"><div class="big"><span style="display:inline-block;transform:scaleX(1.01)">Іванюк Денис</span></div><svg class="mic" viewBox="0 0 11 14" width="11" height="14"><g fill="none" stroke="#b23a35" stroke-width="1.5" stroke-linecap="round"><rect x="3.5" y="0.8" width="4.2" height="7.4" rx="2.1" fill="#b23a35"/><path d="M2 6.3 Q2 10.2 5.6 10.2 Q9.2 10.2 9.2 6.3"/><path d="M5.6 10.2 V12.8 M3.6 12.8 H7.6"/><path d="M9.8 0.8 L1.6 13.2" stroke="#232323" stroke-width="2.2"/><path d="M9.8 0.8 L1.6 13.2" stroke="#c24038" stroke-width="1.2"/></g></svg><div class="sm">Іванюк Денис</div></div>
<div class="tile" style="left:469.80px"><div class="big"><span style="display:inline-block;transform:scaleX(0.96)">Палівода Діана</span></div><svg class="mic" viewBox="0 0 11 14" width="11" height="14"><g fill="none" stroke="#b23a35" stroke-width="1.5" stroke-linecap="round"><rect x="3.5" y="0.8" width="4.2" height="7.4" rx="2.1" fill="#b23a35"/><path d="M2 6.3 Q2 10.2 5.6 10.2 Q9.2 10.2 9.2 6.3"/><path d="M5.6 10.2 V12.8 M3.6 12.8 H7.6"/><path d="M9.8 0.8 L1.6 13.2" stroke="#232323" stroke-width="2.2"/><path d="M9.8 0.8 L1.6 13.2" stroke="#c24038" stroke-width="1.2"/></g></svg><div class="sm">Палівода Діана</div></div>
<div class="tile" style="left:626.40px"><div class="big"><span style="display:inline-block;transform:scaleX(0.947)">Алина</span></div><svg class="mic" viewBox="0 0 11 14" width="11" height="14"><g fill="none" stroke="#b23a35" stroke-width="1.5" stroke-linecap="round"><rect x="3.5" y="0.8" width="4.2" height="7.4" rx="2.1" fill="#b23a35"/><path d="M2 6.3 Q2 10.2 5.6 10.2 Q9.2 10.2 9.2 6.3"/><path d="M5.6 10.2 V12.8 M3.6 12.8 H7.6"/><path d="M9.8 0.8 L1.6 13.2" stroke="#232323" stroke-width="2.2"/><path d="M9.8 0.8 L1.6 13.2" stroke="#c24038" stroke-width="1.2"/></g></svg><div class="sm">Алина</div></div>
<div class="tile" style="left:783.00px"><div class="big"><span style="display:inline-block;transform:scaleX(0.966)">Ліщинська Єл...</span></div><svg class="mic" viewBox="0 0 11 14" width="11" height="14"><g fill="none" stroke="#b23a35" stroke-width="1.5" stroke-linecap="round"><rect x="3.5" y="0.8" width="4.2" height="7.4" rx="2.1" fill="#b23a35"/><path d="M2 6.3 Q2 10.2 5.6 10.2 Q9.2 10.2 9.2 6.3"/><path d="M5.6 10.2 V12.8 M3.6 12.8 H7.6"/><path d="M9.8 0.8 L1.6 13.2" stroke="#232323" stroke-width="2.2"/><path d="M9.8 0.8 L1.6 13.2" stroke="#c24038" stroke-width="1.2"/></g></svg><div class="sm">Ліщинська Єлизавета</div></div>
<div class="tile" style="left:939.60px"><div class="big"><span style="display:inline-block;transform:scaleX(0.996)">Назар Париду...</span></div><svg class="mic" viewBox="0 0 11 14" width="11" height="14"><g fill="none" stroke="#b23a35" stroke-width="1.5" stroke-linecap="round"><rect x="3.5" y="0.8" width="4.2" height="7.4" rx="2.1" fill="#b23a35"/><path d="M2 6.3 Q2 10.2 5.6 10.2 Q9.2 10.2 9.2 6.3"/><path d="M5.6 10.2 V12.8 M3.6 12.8 H7.6"/><path d="M9.8 0.8 L1.6 13.2" stroke="#232323" stroke-width="2.2"/><path d="M9.8 0.8 L1.6 13.2" stroke="#c24038" stroke-width="1.2"/></g></svg><div class="sm">Назар Паридуха</div></div></div>
</body></html>
